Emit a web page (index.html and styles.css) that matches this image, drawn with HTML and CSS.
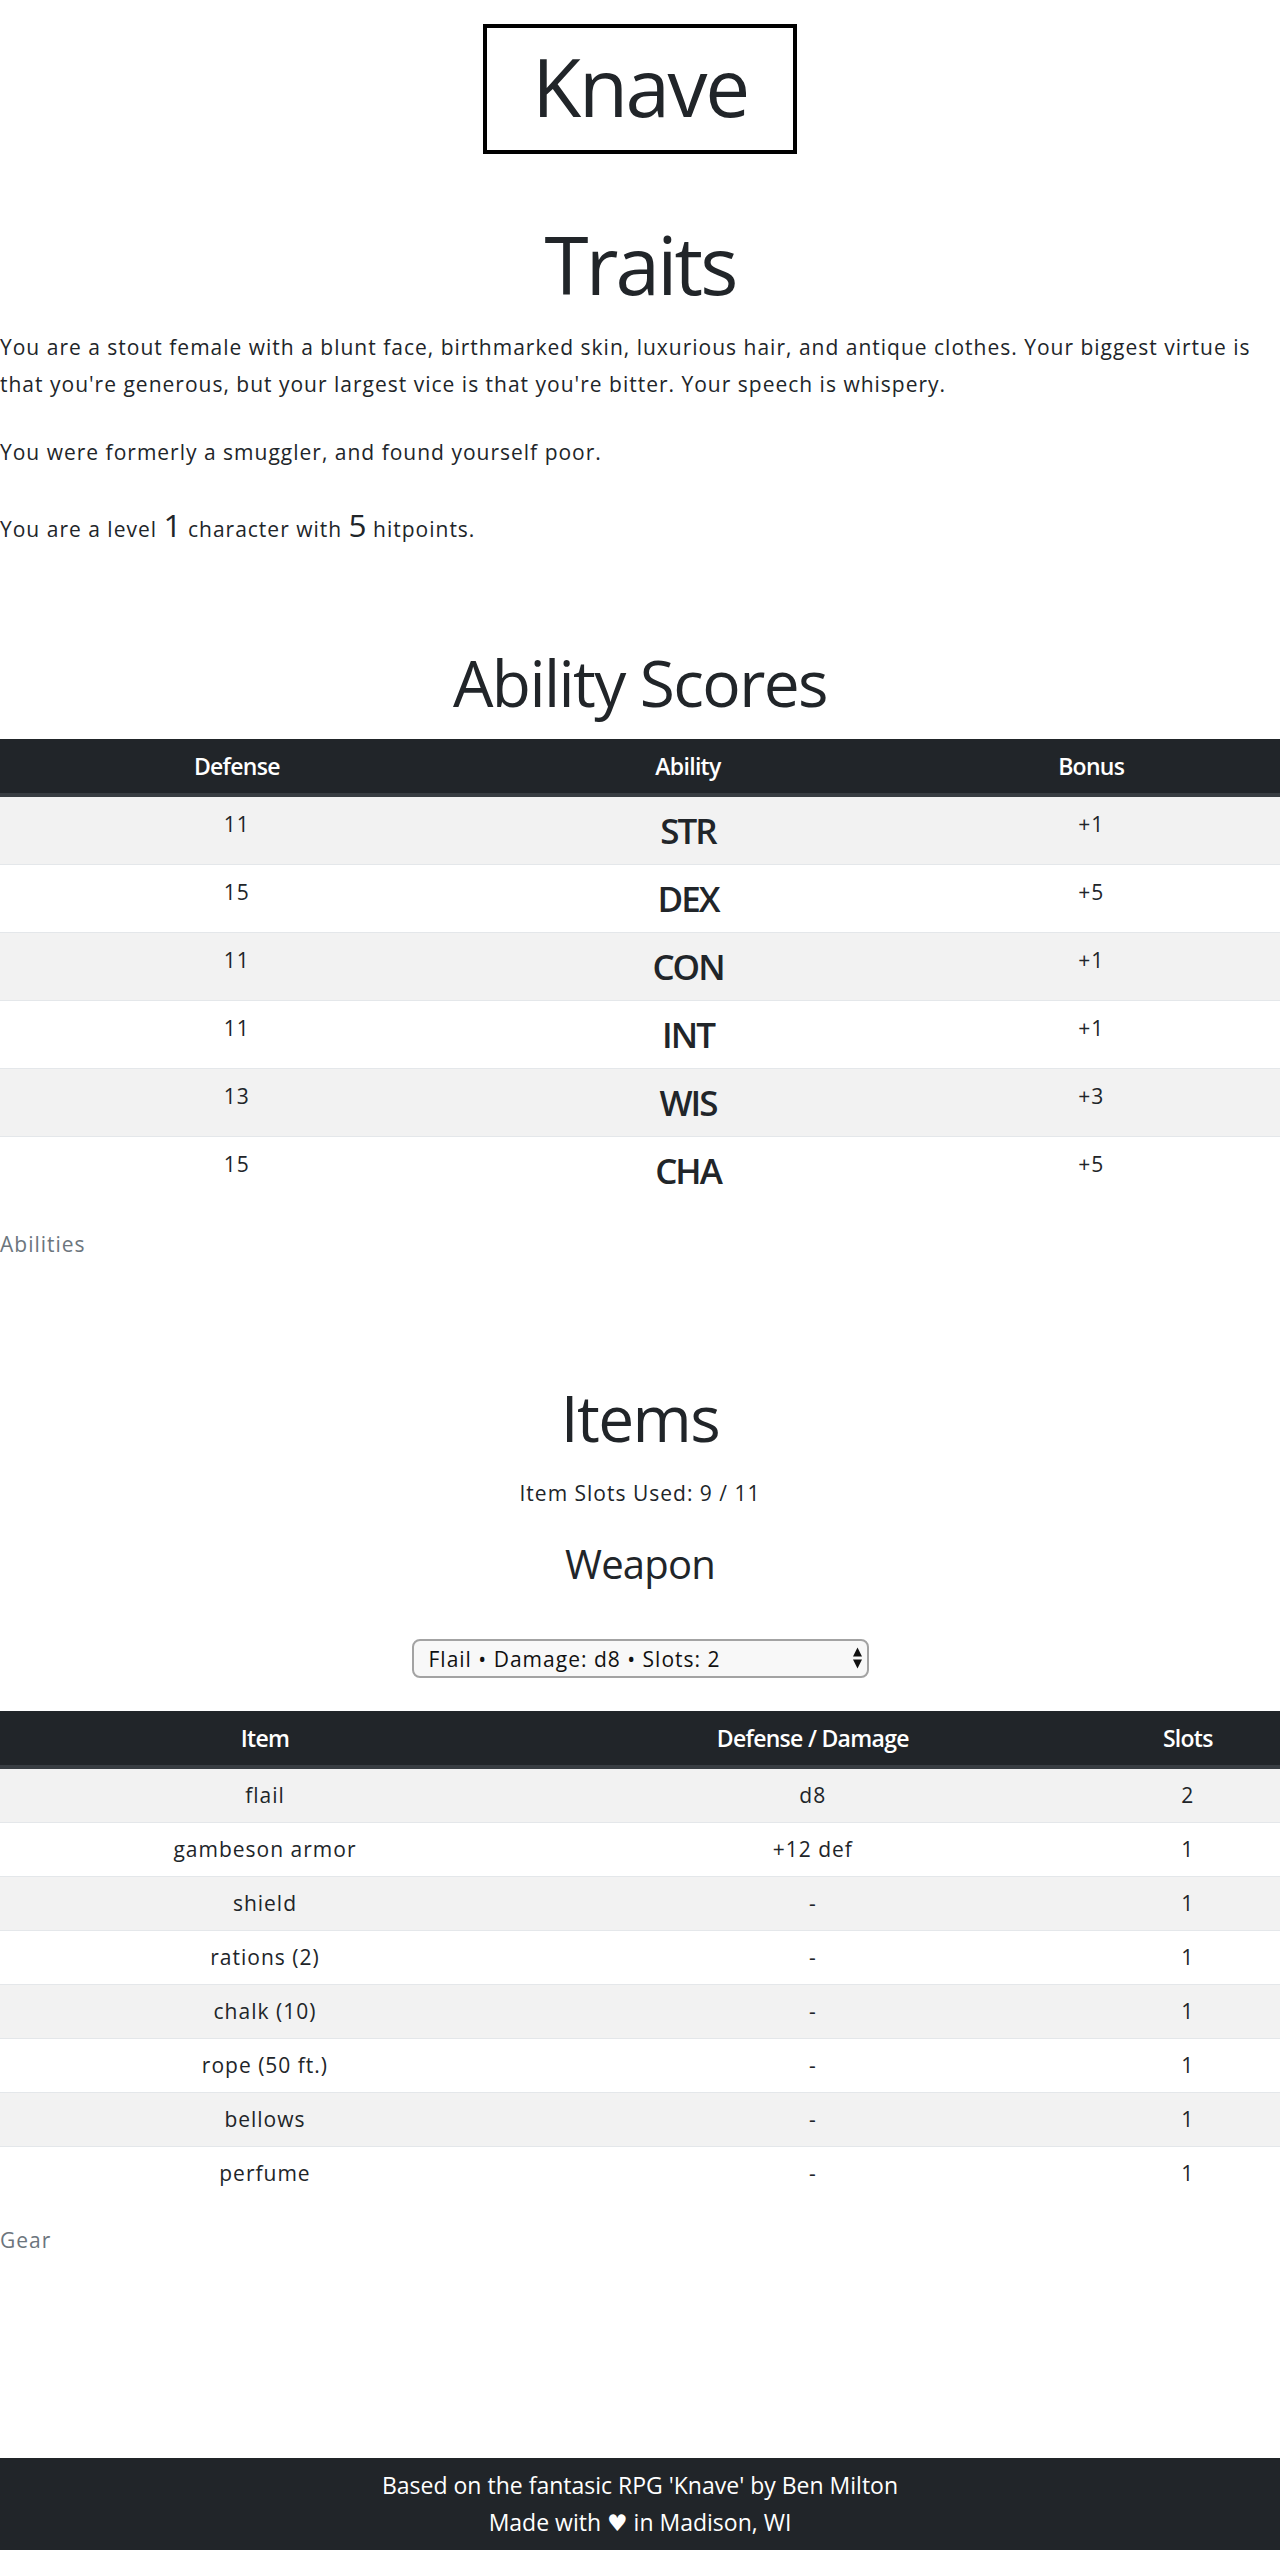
FILE: index.html
```html
<!DOCTYPE html>
<html lang="en">
<head>
<meta charset="utf-8">
<title>Knave</title>
<link rel="stylesheet" href="styles.css">
</head>
<body>
<header class="masthead">
  <h1 class="logo">Knave</h1>
</header>
<main class="sheet">
  <section class="traits">
    <h2 class="title title-xl">Traits</h2>
    <p class="prose">You are a stout female with a blunt face, birthmarked skin, luxurious hair, and antique clothes. Your biggest virtue is that you're generous, but your largest vice is that you're bitter. Your speech is whispery.</p>
    <p class="prose">You were formerly a smuggler, and found yourself poor.</p>
    <p class="prose">You are a level <span class="stat">1</span> character with <span class="stat">5</span> hitpoints.</p>
  </section>

  <section class="abilities">
    <h2 class="title">Ability Scores</h2>
    <table class="sheet-table ability-table">
      <caption class="table-caption">Abilities</caption>
      <colgroup>
        <col class="col-defense">
        <col class="col-ability">
        <col class="col-bonus">
      </colgroup>
      <thead>
        <tr><th>Defense</th><th>Ability</th><th>Bonus</th></tr>
      </thead>
      <tbody>
        <tr><td class="num">11</td><td class="ability">STR</td><td class="num">+1</td></tr>
        <tr><td class="num">15</td><td class="ability">DEX</td><td class="num">+5</td></tr>
        <tr><td class="num">11</td><td class="ability">CON</td><td class="num">+1</td></tr>
        <tr><td class="num">11</td><td class="ability">INT</td><td class="num">+1</td></tr>
        <tr><td class="num">13</td><td class="ability">WIS</td><td class="num">+3</td></tr>
        <tr><td class="num">15</td><td class="ability">CHA</td><td class="num">+5</td></tr>
      </tbody>
    </table>
  </section>

  <section class="items">
    <h2 class="title">Items</h2>
    <p class="slots">Item Slots Used: 9 / 11</p>
    <h3 class="subtitle">Weapon</h3>
    <div class="picker">
      <select class="picker-select">
        <option>Flail • Damage: d8 • Slots: 2</option>
      </select>
      <svg class="picker-arrows" width="9" height="22" viewBox="0 0 9 22" aria-hidden="true">
        <polygon points="0,9.5 4.5,0.5 9,9.5" fill="#111"/>
        <polygon points="0,12.5 9,12.5 4.5,21.5" fill="#111"/>
      </svg>
    </div>
    <table class="sheet-table gear-table">
      <caption class="table-caption">Gear</caption>
      <colgroup>
        <col class="col-item">
        <col class="col-damage">
        <col class="col-slots">
      </colgroup>
      <thead>
        <tr><th>Item</th><th>Defense / Damage</th><th>Slots</th></tr>
      </thead>
      <tbody>
        <tr><td>flail</td><td>d8</td><td>2</td></tr>
        <tr><td>gambeson armor</td><td>+12 def</td><td>1</td></tr>
        <tr><td>shield</td><td>-</td><td>1</td></tr>
        <tr><td>rations (2)</td><td>-</td><td>1</td></tr>
        <tr><td>chalk (10)</td><td>-</td><td>1</td></tr>
        <tr><td>rope (50 ft.)</td><td>-</td><td>1</td></tr>
        <tr><td>bellows</td><td>-</td><td>1</td></tr>
        <tr><td>perfume</td><td>-</td><td>1</td></tr>
      </tbody>
    </table>
  </section>
</main>
<footer class="site-footer">
  <p class="footer-line">Based on the fantasic RPG 'Knave' by Ben Milton</p>
  <p class="footer-line">Made with <span class="heart">♥</span> in Madison, WI</p>
</footer>
</body>
</html>
```

FILE: styles.css
```css
html, body {
  margin: 0;
  padding: 0;
}

body {
  font-family: "Open Sans", "DejaVu Sans", sans-serif;
  color: #212529;
  background: #fff;
  font-size: 21px;
  line-height: 36.75px;
}

.masthead {
  display: flex;
  justify-content: center;
  padding-top: 24px;
}

.logo {
  margin: 0;
  border: 4px solid #000;
  padding: 10px 45px 16px;
  font-size: 80px;
  line-height: 96px;
  font-weight: 400;
  letter-spacing: -0.03em;
}

.title {
  margin: 0 0 18px;
  text-align: center;
  font-weight: 400;
  font-size: 64px;
  line-height: 76.8px;
  letter-spacing: -0.025em;
}

.title-xl {
  font-size: 80px;
  line-height: 96px;
  margin-bottom: 17px;
  letter-spacing: -0.035em;
}

.traits {
  padding-top: 62px;
}

.prose {
  margin: 0 0 31px;
  letter-spacing: 1px;
}

.prose:last-child {
  margin-bottom: 0;
}

.stat {
  font-size: 1.5em;
  line-height: 1.5;
  letter-spacing: 0;
}

.abilities {
  padding-top: 96px;
}

.sheet-table {
  width: 100%;
  border-collapse: separate;
  border-spacing: 0;
  table-layout: fixed;
  text-align: center;
}

.sheet-table th {
  background: #212529;
  color: #fff;
  font-weight: 600;
  font-size: 23px;
  line-height: 30px;
  letter-spacing: -0.7px;
  padding: 12px;
  border-bottom: 4px solid #383d42;
}

.sheet-table td {
  padding: 12px;
  letter-spacing: 1px;
}

.sheet-table tbody tr:nth-child(odd) td {
  background: #f2f2f2;
}

.sheet-table tbody tr + tr td {
  border-top: 1px solid #e4e7ea;
}

.ability-table td {
  line-height: 43px;
}

.ability-table td.num {
  vertical-align: top;
  line-height: 30px;
}

.ability-table td.ability {
  font-size: 35px;
  font-weight: 600;
  letter-spacing: -2px;
}

.col-defense { width: 37%; }
.col-ability { width: 33.5%; }
.col-bonus { width: 29.5%; }

.col-item { width: 41.4%; }
.col-damage { width: 44.2%; }
.col-slots { width: 14.4%; }

.gear-table td {
  line-height: 29px;
}

.table-caption {
  caption-side: bottom;
  text-align: left;
  color: #6c757d;
  padding: 22px 0 0;
  letter-spacing: 1px;
}

.items {
  padding-top: 117px;
}

.slots {
  margin: 0 0 28px;
  text-align: center;
  letter-spacing: 1px;
}

.subtitle {
  margin: 0 0 51.5px;
  text-align: center;
  font-weight: 400;
  font-size: 40px;
  line-height: 48px;
  letter-spacing: -0.02em;
}

.picker {
  position: relative;
  width: 457px;
  margin: 0 auto 33px;
}

.picker-select {
  display: block;
  width: 100%;
  height: 39px;
  -webkit-appearance: none;
  appearance: none;
  border: 2px solid #a3a3a3;
  border-radius: 8px;
  background: #f8f8f8;
  color: #111;
  font-family: inherit;
  font-size: 21px;
  letter-spacing: 1px;
  padding: 0 15px;
  margin: 0;
}

.picker-arrows {
  position: absolute;
  right: 7px;
  top: 8px;
}

.site-footer {
  margin-top: 199px;
  background: #212529;
  color: #fff;
  text-align: center;
  padding: 9px 0 8px;
  font-size: 23px;
  line-height: 37px;
}

.footer-line {
  margin: 0;
}

.heart {
  font-family: "DejaVu Sans", sans-serif;
}
```
